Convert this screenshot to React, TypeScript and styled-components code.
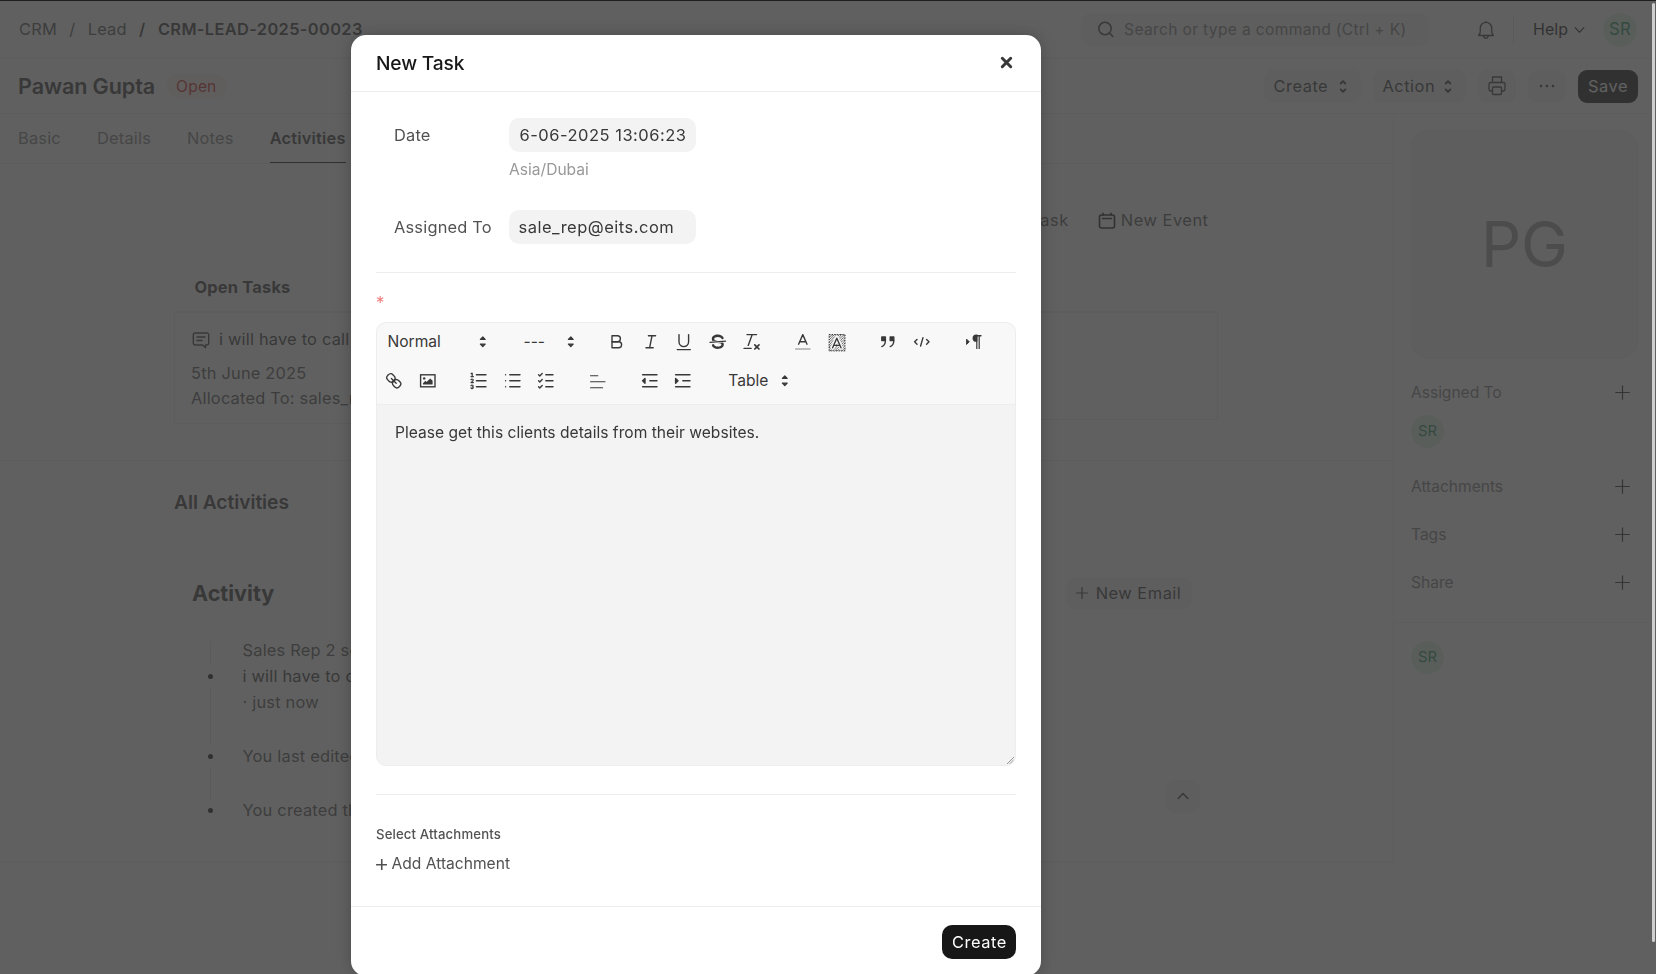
import React from "react";
import styled, { createGlobalStyle } from "styled-components";

const Global = createGlobalStyle`
  *, *::before, *::after { box-sizing: border-box; }
  body {
    margin: 0;
    background: #fff;
    color: #383838;
    font-family: Inter, "Liberation Sans", sans-serif;
    font-size: 16.4px;
    font-weight: 420;
    letter-spacing: 0.0125em;
    line-height: 25px;
    overflow: hidden;
  }
  svg { display: block; flex: none; }
`;

/* ---------- page shell ---------- */

const Page = styled.div`
  height: 974px;
  overflow: hidden;
  display: flex;
  flex-direction: column;
  padding-right: 4px;
  white-space: nowrap;
`;

const Navbar = styled.header`
  height: 59px;
  flex: none;
  display: flex;
  align-items: center;
  justify-content: space-between;
  padding: 1px 15px 0 19px;
  border-bottom: 1px solid #ededed;
`;

const Crumbs = styled.nav`
  display: flex;
  gap: 12.3px;
`;

const Crumb = styled.span<{ $current?: boolean }>`
  color: ${(p) => (p.$current ? "#383838" : "#525252")};
  font-weight: ${(p) => (p.$current ? 600 : 420)};
  letter-spacing: ${(p) => (p.$current ? "0.022em" : "0.0125em")};
`;

const NavRight = styled.div`
  display: flex;
  align-items: center;
`;

const SearchBox = styled.div`
  width: 348px;
  height: 33px;
  border-radius: 10px;
  background: #f3f3f3;
  color: #7c7c7c;
  font-size: 15.6px;
  letter-spacing: 0.021em;
  display: flex;
  align-items: center;
  gap: 10.5px;
  padding-left: 16px;
  margin-right: 47.5px;
`;

const NavDivider = styled.i`
  width: 1px;
  height: 29px;
  background: #e2e2e2;
  margin: 0 19px 0 17px;
`;

const Help = styled.span`
  display: flex;
  align-items: center;
  gap: 6px;
  color: #171717;
  margin-right: 18px;
  font-size: 16px;
  letter-spacing: 0;
`;

const Avatar = styled.span<{ $size: number }>`
  width: ${(p) => p.$size}px;
  height: ${(p) => p.$size}px;
  border-radius: 50%;
  display: flex;
  align-items: center;
  justify-content: center;
  background: #dcf5e4;
  color: #278f5e;
  font-size: ${(p) => (p.$size > 33 ? 16.8 : 14.8)}px;
  letter-spacing: ${(p) => (p.$size > 33 ? "0.02em" : "0")};
`;

const PageHead = styled.div`
  height: 55px;
  flex: none;
  display: flex;
  align-items: center;
  justify-content: space-between;
  padding: 0 14px 0 18px;
  border-bottom: 1px solid #ededed;
`;

const TitleArea = styled.div`
  display: flex;
  align-items: center;
  gap: 12px;
`;

const Title = styled.h1`
  margin: 0;
  font-size: 21.6px;
  font-weight: 600;
  letter-spacing: -0.005em;
`;

const Pill = styled.span`
  height: 24px;
  line-height: 25px;
  padding: 0 10px 0 9px;
  border-radius: 12px;
  font-size: 15.6px;
  letter-spacing: 0.01em;
  background: #fff0f0;
  color: #cc2929;
`;

const Actions = styled.div`
  display: flex;
  gap: 12px;
`;

const ActionButton = styled.button<{ $width: number; $primary?: boolean }>`
  width: ${(p) => p.$width}px;
  height: 33px;
  border: 0;
  border-radius: 9px;
  padding: 0 ${(p) => (p.$width > 80 ? "14px 0 9.5px" : "0")};
  display: flex;
  align-items: center;
  justify-content: ${(p) => (p.$width > 80 ? "space-between" : "center")};
  font: inherit;
  letter-spacing: 0.032em;
  background: ${(p) => (p.$primary ? "#171717" : "#f3f3f3")};
  color: ${(p) => (p.$primary ? "#fff" : "#383838")};
`;

const Columns = styled.div`
  flex: 1;
  display: flex;
  align-items: flex-start;
`;

/* ---------- form column ---------- */

const Main = styled.main`
  width: 1393.5px;
  flex: none;
  height: 748px;
  border-right: 1px solid #ededed;
  border-bottom: 1px solid #ededed;
`;

const Tabs = styled.div`
  height: 50px;
  display: flex;
  gap: 36px;
  padding-left: 18px;
  border-bottom: 1px solid #ededed;
`;

const Tab = styled.span<{ $active?: boolean }>`
  height: 49px;
  line-height: 49px;
  color: ${(p) => (p.$active ? "#383838" : "#7c7c7c")};
  font-weight: ${(p) => (p.$active ? 600 : 420)};
  border-bottom: 1px solid ${(p) => (p.$active ? "#171717" : "transparent")};
`;

const TasksSection = styled.section`
  height: 297px;
  border-bottom: 1px solid #ededed;
  padding: 44px 174px 0;
`;

const QuickActions = styled.div`
  display: flex;
  justify-content: flex-end;
  gap: 29px;
  padding-right: 10px;
  color: #525252;
  letter-spacing: 0.032em;
`;

const QuickAction = styled.span`
  display: flex;
  align-items: center;
  gap: 5px;
`;

const ListHeads = styled.div`
  display: grid;
  grid-template-columns: 1fr 1fr;
  margin-top: 42px;
  padding-left: 20.5px;
  font-weight: 700;
`;

const Lists = styled.div`
  display: grid;
  grid-template-columns: 1fr 1fr;
  align-items: start;
  width: 1044px;
  margin-top: 11px;
`;

const ListBox = styled.div<{ $height: number }>`
  height: ${(p) => p.$height}px;
  border: 1px solid #e8e8e8;
  border-top-width: 2px;
  padding: 14px 16px;
  color: #525252;
`;

const TaskLink = styled.div`
  display: flex;
  align-items: center;
  gap: 9px;
  color: #383838;
  margin-bottom: 9px;
  padding-left: 1px;
`;

const ActivitySection = styled.section`
  padding: 29px 174px 0;
`;

const SectionTitle = styled.h2`
  margin: 0;
  font-size: 19.2px;
  font-weight: 600;
  letter-spacing: -0.002em;
`;

const ActivityHead = styled.div`
  display: flex;
  align-items: center;
  justify-content: space-between;
  margin-top: 62px;
  padding: 0 27px 0 18px;
`;

const ActivityTitle = styled.h3`
  margin: 0;
  font-size: 21.6px;
  font-weight: 700;
  letter-spacing: 0;
`;

const EmailButton = styled.button`
  width: 126px;
  height: 32px;
  border: 0;
  border-radius: 9px;
  background: #f3f3f3;
  color: #383838;
  font: inherit;
  letter-spacing: 0.032em;
  display: flex;
  align-items: center;
  justify-content: center;
  gap: 8px;
`;

const Timeline = styled.ul`
  list-style: none;
  margin: 32px 0 0 34px;
  padding: 0;
`;

const Event = styled.li`
  display: grid;
  grid-template-columns: 34.5px 1fr;
  color: #525252;
`;

const Rail = styled.div<{ $above: number; $below: number }>`
  width: 5px;
  display: grid;
  justify-items: center;
  grid-template-rows: ${(p) => p.$above}px 20px ${(p) => p.$below}px;
  &::before, &::after {
    content: "";
    width: 1px;
    background: #e2e2e2;
  }
`;

const Dot = styled.i`
  align-self: center;
  width: 5px;
  height: 5px;
  border-radius: 50%;
  background: #171717;
`;

const EventText = styled.div<{ $multi?: boolean }>`
  margin-top: ${(p) => (p.$multi ? -4 : 0)}px;
  line-height: ${(p) => (p.$multi ? 26 : 20)}px;
  b { font-weight: 420; color: #383838; }
`;

const ToTop = styled.div`
  margin-top: -40.5px;
  margin-left: 992px;
  width: 34px;
  height: 33px;
  border-radius: 9px;
  background: #f3f3f3;
  display: flex;
  align-items: center;
  justify-content: center;
`;

/* ---------- sidebar ---------- */

const Sidebar = styled.aside`
  flex: 1;
`;

const SidebarTop = styled.div`
  height: 509px;
  padding: 16px 14px 0 17.5px;
  border-bottom: 1px solid #ededed;
`;

const Portrait = styled.div`
  height: 229px;
  border: 1px solid #ededed;
  border-radius: 18px;
  background: #f3f3f3;
  color: #999;
  font-size: 63px;
  letter-spacing: 0;
  display: flex;
  align-items: center;
  justify-content: center;
  margin-bottom: 21px;
`;

const SideRow = styled.div<{ $gap: number }>`
  height: 25px;
  display: flex;
  align-items: center;
  justify-content: space-between;
  padding-right: 8px;
  margin-bottom: ${(p) => p.$gap}px;
  color: #7c7c7c;
  font-size: 15.6px;
  letter-spacing: -0.002em;
  svg { color: #262626; }
`;

const Assignees = styled.div`
  margin: 9.5px 0 26px;
`;

const Followers = styled.div`
  padding: 18px 0 0 17.5px;
`;

/* ---------- overlay ---------- */

const Backdrop = styled.div`
  position: fixed;
  inset: 0;
  background: rgba(56, 56, 56, 0.8);
  border-top: 1px solid #1e1e1e;
`;

const ScrollThumb = styled.div`
  position: fixed;
  top: 3px;
  right: 1px;
  width: 3px;
  height: 939px;
  border-radius: 2px;
  background: #cfcfcf;
`;

const Dialog = styled.div`
  position: fixed;
  top: 35px;
  left: 351.4px;
  width: 689.6px;
  height: 941px;
  border-radius: 15px;
  background: #fff;
  box-shadow: 0 0 16px rgba(0, 0, 0, 0.22);
  display: flex;
  flex-direction: column;
  white-space: nowrap;
`;

const DialogHead = styled.div`
  height: 57px;
  flex: none;
  display: flex;
  align-items: center;
  justify-content: space-between;
  padding: 0 28px 0 24.6px;
  border-bottom: 1px solid #ededed;
  svg { margin-bottom: 2px; }
`;

const DialogTitle = styled.h4`
  margin: 0;
  font-size: 19.2px;
  font-weight: 500;
  letter-spacing: -0.008em;
  color: #171717;
`;

const DialogBody = styled.div`
  flex: 1;
  padding: 0 24.6px;
`;

const Fields = styled.div`
  height: 181px;
  padding: 26px 0 0 18px;
  border-bottom: 1px solid #ededed;
`;

const Field = styled.div`
  display: grid;
  grid-template-columns: 115px 187px;
  align-items: start;
  height: 92px;
`;

const Label = styled.label`
  color: #525252;
  padding-top: 4.5px;
`;

const Input = styled.div`
  height: 34px;
  border-radius: 10px;
  background: #f3f3f3;
  padding: 0 9.5px;
  line-height: 34px;
  font-size: 16.5px;
  letter-spacing: 0.03em;
  overflow: hidden;
`;

const DateValue = styled.div`
  overflow: hidden;
  display: flex;
  justify-content: flex-end;
`;

const Hint = styled.div`
  margin-top: 5px;
  color: #999;
  font-size: 15.6px;
  letter-spacing: 0;
`;

const Required = styled.div`
  height: 49px;
  padding-top: 18px;
  color: #f08080;
  font-size: 16.8px;
`;

const Editor = styled.div`
  height: 444px;
  border: 1px solid #ededed;
  border-radius: 10px;
  overflow: hidden;
  background: #f3f3f3;
  display: flex;
  flex-direction: column;
`;

const Toolbar = styled.div`
  height: 82px;
  background: #f8f8f8;
  border-bottom: 1px solid #ededed;
  padding-top: 4px;
  letter-spacing: 0;
`;

const ToolRow = styled.div`
  height: 39.4px;
  display: flex;
  gap: 18px;
`;

const ToolGroup = styled.div`
  height: 28.8px;
  display: flex;
`;

const Tool = styled.span`
  width: 33.6px;
  padding: 3.6px 6px;
`;

const Picker = styled.span<{ $width: number; $indent?: number; $end?: number }>`
  width: ${(p) => p.$width}px;
  padding-left: ${(p) => p.$indent ?? 10.5}px;
  padding-right: ${(p) => p.$end ?? 0}px;
  line-height: 29px;
  font-size: 15.6px;
  display: flex;
  align-items: center;
  justify-content: space-between;
`;

const Writing = styled.div`
  flex: 1;
  display: flex;
  justify-content: space-between;
  padding: 15px 1px 1px 18px;
  font-size: 15.6px;
  letter-spacing: 0.001em;
`;

const Grip = styled.svg`
  align-self: flex-end;
`;

const Attachments = styled.div`
  margin-top: 28px;
  border-top: 1px solid #ededed;
  padding-top: 27px;
  color: #525252;
`;

const AttachLabel = styled.div`
  font-size: 13.2px;
  font-weight: 500;
  letter-spacing: 0.01em;
`;

const AttachLink = styled.div`
  display: flex;
  align-items: center;
  gap: 4px;
  margin-top: 4px;
  font-size: 15.6px;
  letter-spacing: 0;
  svg { margin-top: 2px; }
`;

const DialogFoot = styled.div`
  height: 70px;
  flex: none;
  border-top: 1px solid #ededed;
  padding: 18px 24.6px 0;
  display: flex;
  justify-content: flex-end;
`;

const CreateButton = styled.button`
  width: 74px;
  height: 34px;
  border: 0;
  border-radius: 10px;
  background: #171717;
  color: #fff;
  font: inherit;
  letter-spacing: 0.032em;
  padding: 0;
`;

/* ---------- icons ---------- */

const Line = ({ w, h = w, vb, sw = 1.3, color = "currentColor", children }: {
  w: number; h?: number; vb: string; sw?: number; color?: string; children: React.ReactNode;
}) => (
  <svg width={w} height={h} viewBox={vb} fill="none" stroke={color} strokeWidth={sw} strokeLinecap="round" strokeLinejoin="round">
    {children}
  </svg>
);

const SelectIcon = () => (
  <Line w={8} h={15} vb="0 0 8 15" sw={1.9}>
    <path d="M1.700 4.500 4 2.200l2.300 2.300M1.700 10.500 4 12.800l2.300-2.300" />
  </Line>
);

const PlusIcon = ({ size, sw = 1.2 }: { size: number; sw?: number }) => (
  <Line w={size} vb="0 0 14 14" sw={(sw * 14) / size}>
    <path d="M7 .7v12.600M.7 7h12.600" />
  </Line>
);

const F = { fill: "currentColor", stroke: "none" };
const T = { strokeWidth: 1 };

const Arrows = () => (
  <svg width="21.6" height="21.6" viewBox="0 0 18 18" fill="currentColor" stroke="currentColor" strokeWidth="1" strokeLinejoin="round">
    <path d="M7 11l2 2 2-2zM7 7l2-2 2 2z" />
  </svg>
);

const Glyph = ({ children }: { children: React.ReactNode }) => (
  <Tool>
    <Line w={21.6} vb="0 0 18 18" sw={1.15}>{children}</Line>
  </Tool>
);

const Bold = () => (
  <Glyph>
    <path d="M5 4h4.500a2.500 2.500 0 0 1 0 5H5z" />
    <path d="M5 9h5.500a2.500 2.500 0 0 1 0 5H5z" />
  </Glyph>
);
const Italic = () => <Glyph><path d="M7 4h6M5 14h6M8 14l2-10" /></Glyph>;
const Underline = () => (
  <Glyph>
    <path d="M5 3v6a4 4 0 0 0 8 0V3" />
    <rect x="3" y="15" width="12" height="1" rx=".5" {...F} />
  </Glyph>
);
const Strike = () => (
  <Glyph>
    <path d="M15.500 8.500l-13 1" {...T} />
    <path {...F} d="M9.007,8C6.542,7.791,6,7.519,6,6.500,6,5.792,7.283,5,9,5c1.571,0,2.765.679,2.969,1.309a1,1,0,0,0,1.900-.617C13.356,4.106,11.354,3,9,3,6.200,3,4,4.538,4,6.500a3.200,3.200,0,0,0,.5,1.843Z" />
    <path {...F} d="M8.984,10C11.457,10.208,12,10.479,12,11.500c0,0.708-1.283,1.500-3,1.500-1.571,0-2.765-.679-2.969-1.309a1,1,0,1,0-1.900.617C4.644,13.894,6.646,15,9,15c2.800,0,5-1.538,5-3.500a3.200,3.200,0,0,0-.5-1.843Z" />
  </Glyph>
);
const Clean = () => (
  <Glyph>
    <path d="M5 3h8M6 12l3.350-9" />
    <path d="M11.500 11.500l3.500 3.500M15 11.500l-3.500 3.500" strokeWidth="1.400" />
    <rect x="2" y="14" width="7" height="1" rx=".5" {...F} />
  </Glyph>
);
const Colour = () => (
  <Glyph>
    <path d="M3 15h12" opacity=".4" />
    <path d="M5.500 11 9 3l3.500 8M11.630 9H6.380" />
  </Glyph>
);
const Highlight = () => (
  <Glyph>
    <defs>
      <pattern id="hatch" width="2" height="2" patternUnits="userSpaceOnUse">
        <path d="M-.5.5l1-1M0 2l2-2M1.500 2.500l1-1" stroke="currentColor" strokeWidth=".6" strokeLinecap="butt" />
      </pattern>
    </defs>
    <rect x="2.200" y="2.500" width="14" height="14.500" fill="url(#hatch)" stroke="none" />
    <path d="M2.700 3h13v13.500h-13z" strokeDasharray="1 1.200" strokeWidth=".9" strokeLinecap="butt" />
    <path d="M5.500 14 9 5.500l3.500 8.500" stroke="#f8f8f8" strokeWidth="3.200" />
    <path d="M5.500 14 9 6l3.500 8M11.630 12H6.380" />
  </Glyph>
);
const Quote = () => (
  <Glyph>
    <rect x="4" y="5" width="3" height="3" fill="currentColor" />
    <rect x="11" y="5" width="3" height="3" fill="currentColor" />
    <path d="M7 8c0 4.031-3 5-3 5M14 8c0 4.031-3 5-3 5" />
  </Glyph>
);
const Code = () => <Glyph><path d="M5 7 3 9l2 2M13 7l2 2-2 2M10 5.500l-2 7" /></Glyph>;
const Direction = () => (
  <Glyph>
    <path d="M3.200 11l2-2-2-2z" fill="currentColor" strokeWidth=".8" />
    <path d="M15 4h-4" />
    <path d="M11 3a3 3 0 0 0 0 6h1V3z" {...F} />
    <rect x="11" y="4" width="1" height="11" {...F} />
    <rect x="13" y="4" width="1" height="11" {...F} />
  </Glyph>
);
const LinkTool = () => (
  <Glyph>
    <path d="M7 7l4 4" />
    <path d="M8.900,4.577a3.476,3.476,0,0,1,.36,4.679A3.476,3.476,0,0,1,4.577,8.900C3.185,7.500,2.035,6.400,4.217,4.217S7.500,3.185,8.900,4.577Z" />
    <path d="M13.423,9.100a3.476,3.476,0,0,0-4.679-.36,3.476,3.476,0,0,0,.36,4.679c1.392,1.392,2.500,2.542,4.679.36S14.815,10.500,13.423,9.100Z" />
  </Glyph>
);
const Picture = () => (
  <Glyph>
    <rect x="3" y="4" width="12" height="10" strokeLinejoin="miter" />
    <circle cx="6" cy="7" r="1" {...F} />
    <path d="M5 12v-1l2-2 1 1 3-3 2 2v3z" {...F} />
  </Glyph>
);
const Ordered = () => (
  <Glyph>
    <path d="M7 4h8M7 9h8M7 14h8" />
    <path d="M2.500 5.500h2M2.600 3l.9-.4v2.700" {...T} />
    <path d="M4.500,10.500h-2c0-.234,1.850-1.076,1.850-2.234A0.959,0.959,0,0,0,2.500,8.156" {...T} />
    <path d="M2.500,14.846a0.959,0.959,0,0,0,1.850-.109A0.700,0.700,0,0,0,3.750,14a0.688,0.688,0,0,0,.6-0.736,0.959,0.959,0,0,0-1.850-.109" {...T} />
  </Glyph>
);
const Bullets = () => <Glyph><path d="M6.500 4H15M6.500 9H15M6.500 14H15M3 4h0M3 9h0M3 14h0" /></Glyph>;
const Checks = () => (
  <Glyph>
    <path d="M9 4h6M9 9h6M9 14h6" />
    <path d="M3 4l1 1 2-2M3 14l1 1 2-2M3 9l1 1 2-2" />
  </Glyph>
);
const Align = () => <Glyph><path d="M3 9.800h12M3 14.800h10M3 4.800h6" strokeWidth="1" /></Glyph>;
const Outdent = () => <Glyph><path d="M3 14h12M3 4h12M9 9h6" /><path d="M5 7v4L3 9z" fill="currentColor" /></Glyph>;
const Indent = () => <Glyph><path d="M3 14h12M3 4h12M9 9h6" /><path d="M3 7v4l2-2z" fill="currentColor" /></Glyph>;

/* ---------- app ---------- */

const groups = [[Bold, Italic, Underline, Strike, Clean], [Colour, Highlight], [Quote, Code], [Direction]];
const groupsBelow = [[LinkTool, Picture], [Ordered, Bullets, Checks], [Align], [Outdent, Indent]];

const renderGroups = (list: React.ComponentType[][]) =>
  list.map((tools, i) => (
    <ToolGroup key={i}>{tools.map((Icon, j) => <Icon key={j} />)}</ToolGroup>
  ));

export default function App() {
  return (
    <>
      <Global />
      <Page>
        <Navbar>
          <Crumbs>
            <Crumb>CRM</Crumb><Crumb>/</Crumb>
            <Crumb>Lead</Crumb><Crumb $current>/</Crumb>
            <Crumb $current>CRM-LEAD-2025-00023</Crumb>
          </Crumbs>
          <NavRight>
            <SearchBox>
              <Line w={17} vb="0 0 17 17" sw={1.5} color="#383838">
                <circle cx="8" cy="7.500" r="6.200" /><path d="M12.500 12l3.200 3.500" />
              </Line>
              Search or type a command (Ctrl + K)
            </SearchBox>
            <Line w={20} vb="0 0 20 20" sw={1.3}>
              <path d="M2.600 15.500c1.200-1.300 1.700-2.600 1.700-4.500V8a5.700 5.700 0 0 1 11.400 0v3c0 1.900.5 3.200 1.700 4.500zM7.800 16a2.200 2.200 0 0 0 4.400 0M10 2V1.400" />
            </Line>
            <NavDivider />
            <Help>
              Help
              <Line w={11} h={8} vb="0 0 12 8" sw={1.2}><path d="M1.200 1.500 6 6.500l4.800-5" /></Line>
            </Help>
            <Avatar $size={34}>SR</Avatar>
          </NavRight>
        </Navbar>

        <PageHead>
          <TitleArea>
            <Title>Pawan Gupta</Title>
            <Pill>Open</Pill>
          </TitleArea>
          <Actions>
            <ActionButton $width={97}>Create<SelectIcon /></ActionButton>
            <ActionButton $width={93}>Action<SelectIcon /></ActionButton>
            <ActionButton $width={38}>
              <Line w={18} h={20} vb="0 0 18 20" sw={1.3}>
                <path d="M4.500 6.500V1h9v5.500M4.500 15H2.800A1.800 1.800 0 0 1 1 13.200V8.300a1.800 1.800 0 0 1 1.800-1.800h12.400A1.800 1.800 0 0 1 17 8.300v4.900a1.800 1.800 0 0 1-1.800 1.800h-1.700" />
                <rect x="4.500" y="11" width="9" height="7.500" rx="1" />
              </Line>
            </ActionButton>
            <ActionButton $width={38}>
              <svg width="16" height="4" viewBox="0 0 16 4" fill="currentColor">
                <circle cx="2" cy="2" r="1.300" /><circle cx="8" cy="2" r="1.300" /><circle cx="14" cy="2" r="1.300" />
              </svg>
            </ActionButton>
            <ActionButton $width={60} $primary>Save</ActionButton>
          </Actions>
        </PageHead>

        <Columns>
          <Main>
            <Tabs>
              <Tab>Basic</Tab><Tab>Details</Tab><Tab>Notes</Tab><Tab $active>Activities</Tab>
            </Tabs>
            <TasksSection>
              <QuickActions>
                <QuickAction>New Task</QuickAction>
                <QuickAction>
                  <Line w={18} vb="0 0 18 18" sw={1.6} color="#171717">
                    <rect x="1.500" y="3" width="15" height="13" rx="2" />
                    <path d="M4.500 6.500h9M5 1.200V3M13 1.200V3" />
                  </Line>
                  New Event
                </QuickAction>
              </QuickActions>
              <ListHeads><span>Open Tasks</span><span>Open Events</span></ListHeads>
              <Lists>
                <ListBox $height={113}>
                  <TaskLink>
                    <Line w={18} vb="0 0 18 18" sw={1.4}>
                      <path d="M3 2h12a1.700 1.700 0 0 1 1.700 1.700v8.600A1.700 1.700 0 0 1 15 14h-1.500v2.700L10.500 14H3a1.700 1.700 0 0 1-1.700-1.700V3.700A1.700 1.700 0 0 1 3 2zM5 6h8M5 9.500h5" />
                    </Line>
                    i will have to call
                  </TaskLink>
                  <div>5th June 2025</div>
                  <div>Allocated To: sales_rep</div>
                </ListBox>
                <ListBox $height={109} />
              </Lists>
            </TasksSection>
            <ActivitySection>
              <SectionTitle>All Activities</SectionTitle>
              <ActivityHead>
                <ActivityTitle>Activity</ActivityTitle>
                <EmailButton><PlusIcon size={12} />New Email</EmailButton>
              </ActivityHead>
              <Timeline>
                <Event>
                  <Rail $above={25} $below={60}><Dot /></Rail>
                  <EventText $multi>
                    Sales Rep 2 set<br /><b>i will have to call</b><br />· just now
                  </EventText>
                </Event>
                <Event>
                  <Rail $above={0} $below={34}><Dot /></Rail>
                  <EventText>You last edited this</EventText>
                </Event>
                <Event>
                  <Rail $above={0} $below={0}><Dot /></Rail>
                  <EventText>You created this</EventText>
                </Event>
              </Timeline>
              <ToTop>
                <Line w={12} h={8} vb="0 0 12 8" sw={1.5}><path d="M1.200 6.500 6 1.500l4.800 5" /></Line>
              </ToTop>
            </ActivitySection>
          </Main>

          <Sidebar>
            <SidebarTop>
              <Portrait>PG</Portrait>
              <SideRow $gap={0}>Assigned To<PlusIcon size={15} /></SideRow>
              <Assignees><Avatar $size={33}>SR</Avatar></Assignees>
              <SideRow $gap={23}>Attachments<PlusIcon size={15} /></SideRow>
              <SideRow $gap={23}>Tags<PlusIcon size={15} /></SideRow>
              <SideRow $gap={0}>Share<PlusIcon size={15} /></SideRow>
            </SidebarTop>
            <Followers><Avatar $size={33}>SR</Avatar></Followers>
          </Sidebar>
        </Columns>
      </Page>

      <Backdrop />
      <ScrollThumb />

      <Dialog role="dialog">
        <DialogHead>
          <DialogTitle>New Task</DialogTitle>
          <Line w={13} vb="0 0 13 13" sw={3} color="#383838"><path d="M2.300 2.300l8.400 8.400M10.700 2.300l-8.400 8.400" /></Line>
        </DialogHead>
        <DialogBody>
          <Fields>
            <Field>
              <Label>Date</Label>
              <div>
                <Input><DateValue>6-06-2025 13:06:23</DateValue></Input>
                <Hint>Asia/Dubai</Hint>
              </div>
            </Field>
            <Field>
              <Label>Assigned To</Label>
              <Input>sale_rep@eits.com</Input>
            </Field>
          </Fields>
          <Required>*</Required>
          <Editor>
            <Toolbar>
              <ToolRow>
                <ToolGroup><Picker $width={117}>Normal<Arrows /></Picker></ToolGroup>
                <ToolGroup><Picker $width={70.2} $indent={11.5} $end={0.8}>---<Arrows /></Picker></ToolGroup>
                {renderGroups(groups)}
              </ToolRow>
              <ToolRow>
                {renderGroups(groupsBelow)}
                <ToolGroup><Picker $width={77.7}>Table<Arrows /></Picker></ToolGroup>
              </ToolRow>
            </Toolbar>
            <Writing>
              Please get this clients details from their websites.
              <Grip width="7" height="7" viewBox="0 0 7 7" stroke="#999" strokeWidth="1">
                <path d="M0 7 7 0M2.500 7 7 2.500M5 7l2-2" />
              </Grip>
            </Writing>
          </Editor>
          <Attachments>
            <AttachLabel>Select Attachments</AttachLabel>
            <AttachLink><PlusIcon size={11.5} sw={1.6} />Add Attachment</AttachLink>
          </Attachments>
        </DialogBody>
        <DialogFoot><CreateButton>Create</CreateButton></DialogFoot>
      </Dialog>
    </>
  );
}
